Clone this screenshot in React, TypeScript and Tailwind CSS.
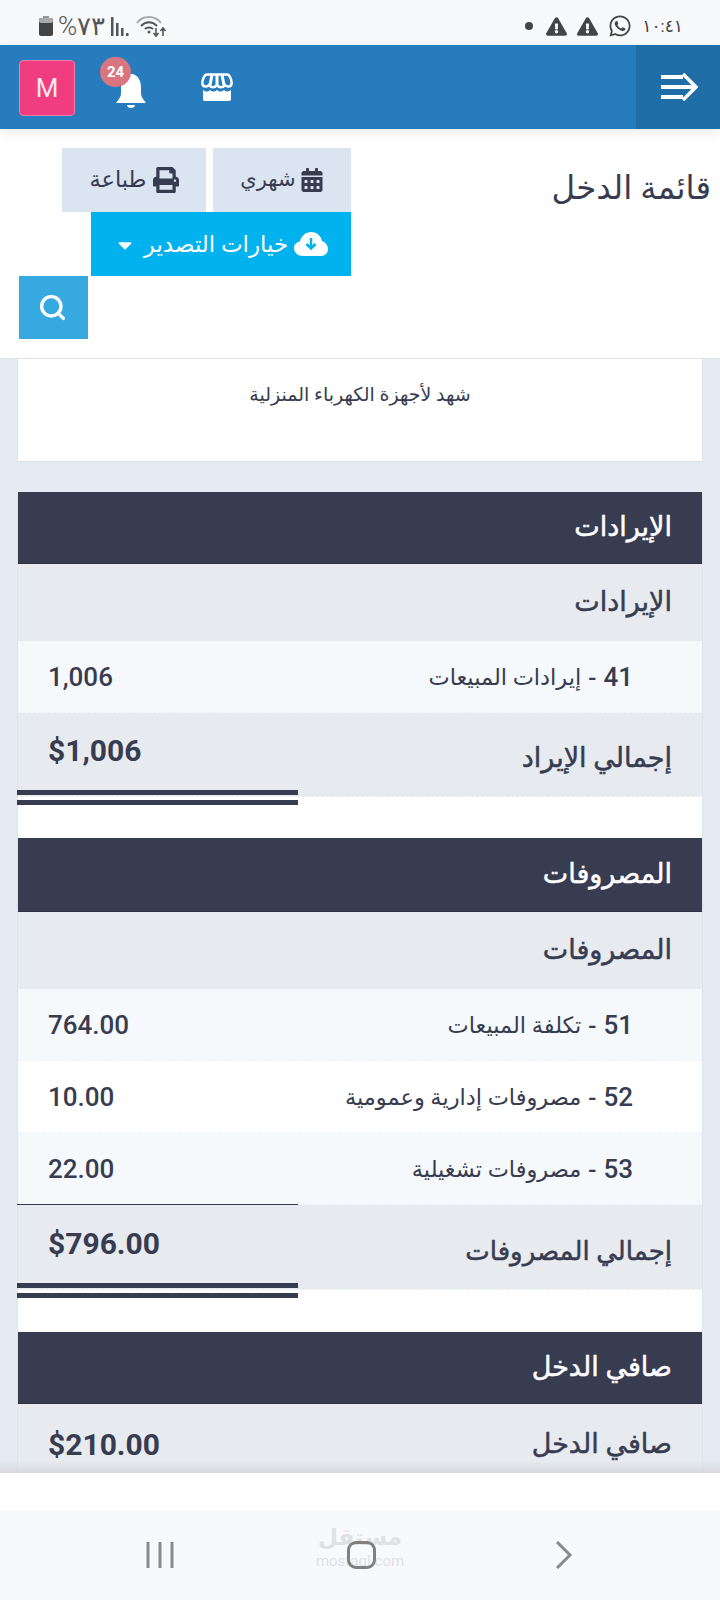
import React from "react";
import { FaCalendarAlt, FaPrint, FaWhatsapp, FaExclamationTriangle, FaCaretDown } from "react-icons/fa";
import { Search } from "lucide-react";

const FONT = "font-['Roboto','Noto_Sans','DejaVu_Sans',sans-serif]";

function SectionHeader({ children, tall }: { children: React.ReactNode; tall?: boolean }) {
  return (
    <div className={`${tall ? "h-[74px]" : "h-[72px]"} bg-[#383c50] text-white flex items-center px-[30px] text-[27px] [-webkit-text-stroke:0.5px_currentColor] border-b border-[#2d3142]`}>
      {children}
    </div>
  );
}

function SubHeader({ children }: { children: React.ReactNode }) {
  return (
    <div className="h-[77px] bg-[#e7ebf0] text-[#383c50] flex items-center px-[30px] text-[27px] [-webkit-text-stroke:0.5px_currentColor]">
      {children}
    </div>
  );
}

function Row({ code, name, value, alt }: { code: string; name: string; value: string; alt?: boolean }) {
  return (
    <div className={`h-[72px] flex items-center justify-between pt-[2px] pr-[69px] pl-[30px] text-[#383c50] border-b border-dashed border-[#eef1f5] ${alt ? "bg-[#f5f9fc]" : "bg-white"}`}>
      <span className="text-[22.5px] flex items-center">
        <span className="font-medium text-[26px]">{code}</span>
        <span className="font-medium text-[24px] mx-[7px]">-</span>
        <span>{name}</span>
      </span>
      <span className="text-[26px] font-medium">{value}</span>
    </div>
  );
}

function Total({ label, value, topLine, tall }: { label: string; value: string; topLine?: boolean; tall?: boolean }) {
  return (
    <div className="relative">
      <div className={`${tall ? "h-[85px]" : "h-[84px]"} bg-[#e7ebf0] flex items-center justify-between px-[30px] text-[#383c50] border-b border-dashed border-[#f4f5f7]`}>
        <span className={`${tall ? "text-[26px]" : "text-[27px]"} [-webkit-text-stroke:0.5px_currentColor] pt-2`}>{label}</span>
        <span className="text-[30px] font-bold pb-2">{value}</span>
      </div>
      {topLine && <div className="absolute top-[-1px] left-[-1px] w-[281px] h-px bg-[#383c50]" />}
      <div className={`absolute ${tall ? "top-[78px]" : "top-[77px]"} left-[-1px] w-[281px] h-[15px] border-y-[5px] border-[#383c50]`} />
    </div>
  );
}

export default function App() {
  return (
    <div dir="rtl" className={`${FONT} w-[720px] h-[1600px] flex flex-col overflow-hidden bg-[#e3eaf2]`}>
      {/* Status bar */}
      <div dir="ltr" className="h-[45px] bg-[#f8f9fb] flex items-center justify-between pl-[39px] pr-[37px] pt-[7px] text-[#444] shrink-0">
        <div className="flex items-center">
          <svg width="14" height="20" viewBox="0 0 14 20">
            <rect x="4" y="0" width="6" height="3" fill="#999" />
            <rect x="0" y="2" width="14" height="18" rx="2" fill="#444" />
            <rect x="0" y="2" width="14" height="5" rx="2" fill="#aaa" />
          </svg>
          <span className="text-[26px] font-light leading-none ml-[5px] text-[#555]">%٧٣</span>
          <svg width="18" height="20" viewBox="0 0 18 20" className="ml-[6px]" fill="#555">
            <rect x="0" y="1" width="2.5" height="19" />
            <rect x="5" y="7" width="2.5" height="13" />
            <rect x="10" y="12" width="2.5" height="8" />
            <rect x="15" y="17" width="2.5" height="3" />
          </svg>
          <svg width="30" height="22" viewBox="0 0 30 22" fill="none" stroke="#555" strokeWidth="2" className="ml-[7px]">
            <path d="M1 8 C7 0 19 0 25 8" stroke="#aaa" />
            <path d="M5 11 C10 6 16 6 21 11" />
            <path d="M9 14 C11 12 15 12 17 14" />
            <circle cx="13" cy="17" r="1.5" fill="#555" stroke="none" />
            <path d="M20 13 V21 M17.5 18 L20 21 L22.5 18" strokeWidth="1.6" />
            <path d="M27 21 V13 M24.5 16 L27 13 L29.5 16" strokeWidth="1.6" />
          </svg>
        </div>
        <div className="flex items-center">
          <span className="w-[8px] h-[8px] rounded-full bg-[#444] mr-[13px]" />
          <FaExclamationTriangle className="text-[21px] text-[#444] mr-[10px]" />
          <FaExclamationTriangle className="text-[21px] text-[#444] mr-[10px]" />
          <FaWhatsapp className="text-[24px] text-[#444] mr-[10px]" />
          <span className="text-[17px] leading-none">١٠:٤١</span>
        </div>
      </div>

      {/* App bar */}
      <div className="h-[84px] bg-[#277cbd] flex items-center shrink-0 shadow-[0_4px_12px_rgba(0,0,0,0.08)] relative z-10">
        <div className="w-[84px] h-full bg-[#206ea8] flex items-center justify-center">
          <svg width="38" height="28" viewBox="0 0 38 28" fill="none" stroke="white" strokeWidth="4" className="translate-x-[2px]">
            <path d="M0 4 H22 M0 14 H34 M0 24 H22" />
            <path d="M22 1 L35 14 L22 27" strokeWidth="3.5" />
          </svg>
        </div>
        <div className="flex-1" />
        <svg width="32" height="28" viewBox="0 0 32 28" className="ml-[54px] -mt-[1px]">
          <path
            d="M6 1.5 H26 C29 1.5 31 8 30.5 11 C30 14 26 14.5 24 12 C22 15 18 15 16 12 C14 15 10 15 8 12 C6 14.5 2 14 1.5 11 C1 8 3 1.5 6 1.5 Z"
            fill="#277cbd"
            stroke="white"
            strokeWidth="2.5"
          />
          <path d="M11 2 L9 12 M16 2 V12 M21 2 L23 12" stroke="white" strokeWidth="3" fill="none" />
          <path
            d="M2 17 C5 19 7 19 9 17 C12 19 13 19 16 17 C19 19 20 19 23 17 C25 19 27 19 30 17 V26 C30 27.5 29 28 28 28 H4 C3 28 2 27.5 2 26 Z"
            fill="white"
          />
        </svg>
        <div className="relative ml-[40px] w-[32px] h-[36px] mt-[8px]">
          <svg width="32" height="36" viewBox="0 0 32 36" fill="white">
            <path d="M16 1 C9 1 6 8 6 14 V20 C6 24 4 26 1 30 H31 C28 26 26 24 26 20 V14 C26 8 23 1 16 1 Z" />
            <path d="M12 32 H20 C20 36 12 36 12 32 Z" />
          </svg>
          <span className="absolute -top-[16px] right-[16px] w-[31px] h-[30px] rounded-full bg-[#d8757f] text-white text-[15px] font-bold flex items-center justify-center">24</span>
        </div>
        <div className="w-[56px] h-[56px] ml-[19px] mt-[2px] rounded-[4px] bg-[#f03d80] border border-[#e77fa8] text-[#fde7f0] text-[26px] flex items-center justify-center">M</div>
      </div>

      {/* Page head */}
      <div className="bg-white h-[230px] shrink-0 border-b border-[#e0e3e7] flex items-start pt-[19px] pr-[9px] pl-[19px] text-[#383c50]">
        <h1 className="text-[32.5px] font-normal w-[360px] pt-[16px] leading-[48px]">قائمة الدخل</h1>
        <div className="flex flex-wrap justify-start w-[332px]">
          <div className="w-[138px] h-[64px] bg-[#dae5f1] flex items-center justify-center gap-[4px] text-[21px] ml-[7px]">
            <FaCalendarAlt className="text-[24px]" />
            <span>شهري</span>
          </div>
          <div className="w-[144px] h-[64px] bg-[#dae5f1] flex items-center justify-center gap-[6px] text-[22.5px]">
            <FaPrint className="text-[26px]" />
            <span>طباعة</span>
          </div>
          <div className="w-[260px] h-[64px] bg-[#02b2ee] text-white flex items-center justify-center gap-[6px] text-[23px] pt-[2px]">
            <svg width="34" height="24" viewBox="0 0 34 24" className="-mt-[3px]">
              <path d="M9 24 C3 24 0 20 0 16 C0 12 3 10 6 9.5 C7 4 12 0 17 0 C23 0 27 4 28 9 C31 10 34 13 34 17 C34 21 31 24 27 24 Z" fill="white" />
              <path d="M17 6 V16 M12.5 12 L17 16.5 L21.5 12" stroke="#02b2ee" strokeWidth="2.5" fill="none" />
            </svg>
            <span>خيارات التصدير</span>
            <FaCaretDown className="text-[22px] mr-[2px]" />
          </div>
          <div className="w-full flex justify-end">
            <div className="w-[69px] h-[63px] bg-[#36a9e1] text-white flex items-center justify-center pr-[2px]">
              <Search size={29} strokeWidth={2.8} />
            </div>
          </div>
        </div>
      </div>

      {/* Content */}
      <div className="flex-1 min-h-0 overflow-hidden px-[17px] relative">
        <div className="h-[103px] bg-white border border-t-0 border-[#dde1e6] flex justify-center pt-[22px] text-[19px] text-[#383c50]">
          شهد لأجهزة الكهرباء المنزلية
        </div>
        <div className="mt-[30px] bg-white border-x border-[#dde4ec]">
          <SectionHeader>الإيرادات</SectionHeader>
          <SubHeader>الإيرادات</SubHeader>
          <Row code="41" name="إيرادات المبيعات" value="1,006" alt />
          <Total label="إجمالي الإيراد" value="$1,006" />
          <div className="h-[41px]" />
          <SectionHeader tall>المصروفات</SectionHeader>
          <SubHeader>المصروفات</SubHeader>
          <Row code="51" name="تكلفة المبيعات" value="764.00" alt />
          <Row code="52" name="مصروفات إدارية وعمومية" value="10.00" />
          <Row code="53" name="مصروفات تشغيلية" value="22.00" alt />
          <Total label="إجمالي المصروفات" value="$796.00" topLine tall />
          <div className="h-[42px]" />
          <SectionHeader>صافي الدخل</SectionHeader>
          <div className="h-[80px] bg-[#e7ebf0] flex items-center justify-between px-[30px] text-[#383c50]">
            <span className="text-[27px] [-webkit-text-stroke:0.5px_currentColor]">صافي الدخل</span>
            <span className="text-[30px] font-bold">$210.00</span>
          </div>
        </div>
        <div className="absolute bottom-0 inset-x-0 h-[12px] bg-gradient-to-b from-transparent to-[#d6d9de]" />
      </div>

      {/* Bottom */}
      <div className="h-[37px] bg-white shrink-0" />
      <div dir="ltr" className="h-[90px] bg-[#f8f9fb] shrink-0 flex items-center justify-between pl-[146px] pr-[147px] relative">
        <svg width="28" height="28" viewBox="0 0 28 28" stroke="#8a8a8a" strokeWidth="3" fill="none">
          <path d="M2 1 V27 M14 1 V27 M26 1 V27" />
        </svg>
        <div className="w-[29px] h-[28px] mr-[6px] rounded-[9px] border-[3px] border-[#808080] relative z-10" />
        <svg width="18" height="28" viewBox="0 0 18 28" stroke="#8a8a8a" strokeWidth="3" fill="none">
          <path d="M2 1 L15 14 L2 27" />
        </svg>
        <div className="absolute left-[315px] top-[12px] w-[90px] flex flex-col items-center text-[#dfe1e3] leading-none">
          <span className="text-[23px] font-bold leading-[32px]">مستقل</span>
          <span className="text-[15px] leading-[14px]">mostaql.com</span>
        </div>
      </div>
    </div>
  );
}
